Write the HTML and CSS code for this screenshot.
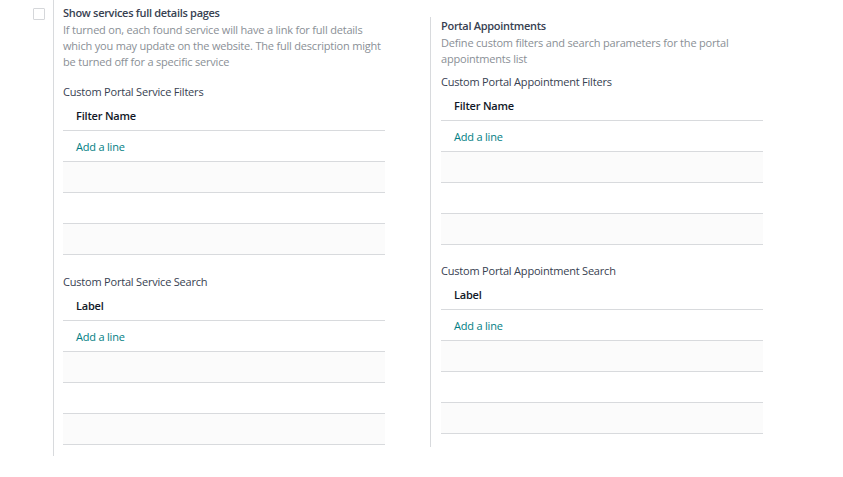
FILE: index.html
```html
<!DOCTYPE html>
<html lang="en">
<head>
    <meta charset="UTF-8">
    <meta name="viewport" content="width=device-width, initial-scale=1.0">
    <title>Settings - Portal</title>
    <link rel="stylesheet" href="styles.css">
</head>
<body>
    <div class="settings">
        <!-- services column -->
        <div class="setting-box">
            <div class="setting-left">
                <span class="checkbox"></span>
            </div>
            <div class="setting-right">
                <div class="setting-title">Show services full details pages</div>
                <div class="setting-help">If turned on, each found service will have a link for full details which you may update on the website. The full description might be turned off for a specific service</div>

                <div class="field-label first">Custom Portal Service Filters</div>
                <table class="o2m">
                    <thead><tr><th>Filter Name</th></tr></thead>
                    <tbody>
                        <tr><td><a href="#">Add a line</a></td></tr>
                        <tr class="striped"><td></td></tr>
                        <tr><td></td></tr>
                        <tr class="striped"><td></td></tr>
                    </tbody>
                </table>

                <div class="field-label">Custom Portal Service Search</div>
                <table class="o2m">
                    <thead><tr><th>Label</th></tr></thead>
                    <tbody>
                        <tr><td><a href="#">Add a line</a></td></tr>
                        <tr class="striped"><td></td></tr>
                        <tr><td></td></tr>
                        <tr class="striped"><td></td></tr>
                    </tbody>
                </table>
            </div>
        </div>

        <!-- appointments column -->
        <div class="setting-box appointments">
            <div class="setting-right">
                <div class="setting-title">Portal Appointments</div>
                <div class="setting-help">Define custom filters and search parameters for the portal appointments list</div>

                <div class="field-label near">Custom Portal Appointment Filters</div>
                <table class="o2m">
                    <thead><tr><th>Filter Name</th></tr></thead>
                    <tbody>
                        <tr><td><a href="#">Add a line</a></td></tr>
                        <tr class="striped"><td></td></tr>
                        <tr><td></td></tr>
                        <tr class="striped"><td></td></tr>
                    </tbody>
                </table>

                <div class="field-label">Custom Portal Appointment Search</div>
                <table class="o2m">
                    <thead><tr><th>Label</th></tr></thead>
                    <tbody>
                        <tr><td><a href="#">Add a line</a></td></tr>
                        <tr class="striped"><td></td></tr>
                        <tr><td></td></tr>
                        <tr class="striped"><td></td></tr>
                    </tbody>
                </table>
            </div>
        </div>
    </div>
</body>
</html>
```

FILE: styles.css
```css
body {
    margin: 0;
    background: #fff;
    font-family: 'Open Sans', sans-serif;
    font-size: 11px;
    letter-spacing: -0.2px;
    color: #374151;
}

.settings {
    display: flex;
    align-items: flex-start;
    padding-left: 33px;
}

.setting-box {
    display: flex;
    width: 397px;
}

.setting-left {
    width: 20px;
    padding-top: 8px;
}

.checkbox {
    display: block;
    width: 10px;
    height: 10px;
    border: 1px solid #d5d7da;
    border-radius: 1px;
}

.setting-right {
    border-left: 1px solid #d8dadd;
    padding: 4px 0 11px 9px;
    width: 322px;
}

.appointments {
    margin-top: 17px;
}

.appointments .setting-right {
    padding: 0 0 13px 10px;
}

.setting-title {
    line-height: 18px;
    font-weight: 600;
    letter-spacing: -0.3px;
    color: #374151;
}

.setting-help {
    line-height: 16px;
    color: #8a8f96;
}

.field-label {
    margin-top: 18px;
    line-height: 18px;
    color: #374151;
}

.field-label.first {
    margin-top: 13px;
}

.field-label.near {
    margin-top: 6px;
}

.appointments .field-label {
    margin-top: 17px;
}

.appointments .field-label.near {
    margin-top: 6px;
}

.o2m {
    width: 100%;
    border-collapse: collapse;
}

.o2m th {
    text-align: left;
    font-weight: 600;
    color: #111827;
    height: 29px;
    padding: 0 13px;
    border-bottom: 1px solid #d8dadd;
}

.o2m td {
    height: 30px;
    padding: 0 13px;
    border-bottom: 1px solid #d8dadd;
}

.o2m tr.striped td {
    background: #fbfbfb;
}

.o2m a {
    color: #017e84;
    text-decoration: none;
}
```
